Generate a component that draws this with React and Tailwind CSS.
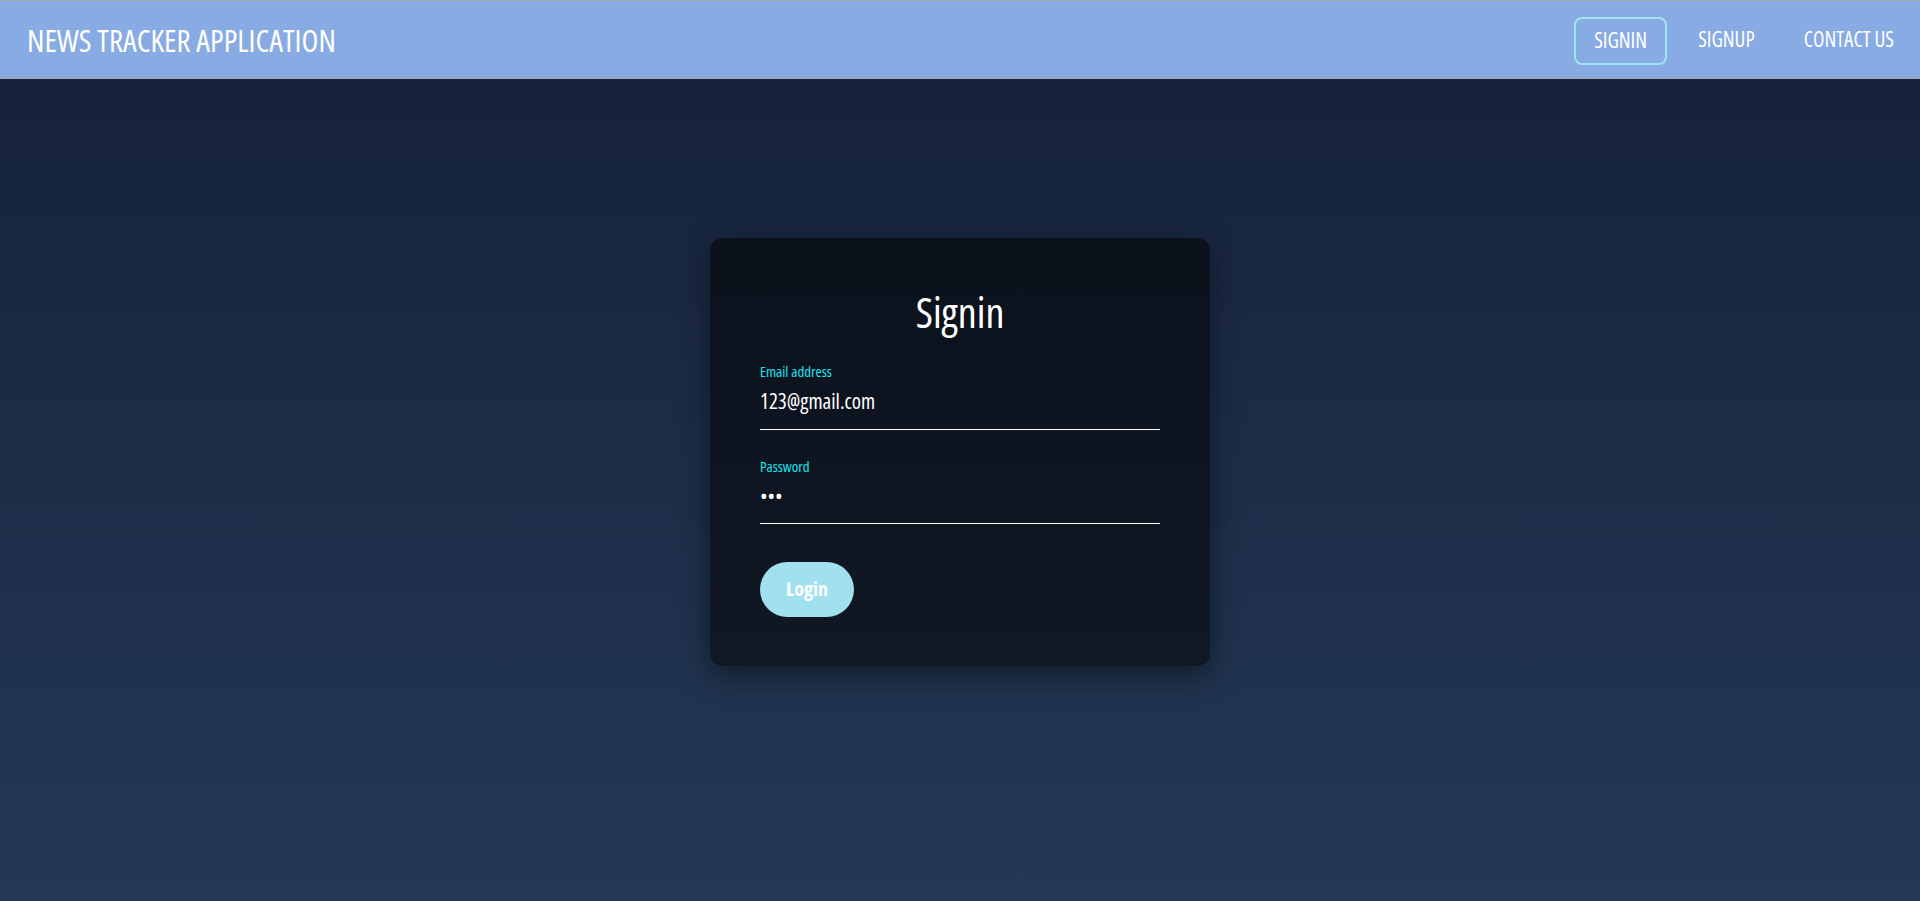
import React, { useState } from "react";

const font = { fontFamily: '"Open Sans", "Roboto", "Liberation Sans", sans-serif' };

const Navbar = () => {
  return (
    <nav className="h-[79px] bg-[#88abe3] border-t border-b border-[#a9a9a9] flex items-center justify-between pl-[27px] pr-[26px]">
      <h1 className="text-[31px] font-medium text-white pt-[2px]">NEWS TRACKER APPLICATION</h1>
      <div className="flex items-center">
        <a className="h-[48px] w-[93px] flex items-center justify-center border-2 border-[#9ee3f0] rounded-[8px] text-white text-[21px] font-medium mt-[2px]">
          SIGNIN
        </a>
        <a className="ml-[31px] text-white text-[21px] font-medium">SIGNUP</a>
        <a className="ml-[49px] text-white text-[21px] font-medium">CONTACT US</a>
      </div>
    </nav>
  );
};

const App = () => {
  const [email, setEmail] = useState("123@gmail.com");
  const [password, setPassword] = useState("123");

  return (
    <div style={font} className="font-stretch-condensed min-h-[901px] flex flex-col bg-gradient-to-b from-[#15203a] to-[#243955]">
      <Navbar />
      <div className="flex justify-center pt-[159px]">
        <form
          onSubmit={(e) => e.preventDefault()}
          className="w-[500px] h-[428px] rounded-[12px] bg-gradient-to-b from-[#0c121c] to-[#101824] shadow-[0_10px_30px_rgba(0,0,0,0.45)] px-[50px] pt-[50px]"
        >
          <h3 className="text-center text-white text-[42px] font-medium leading-[48px]">Signin</h3>

          <div className="mt-[26px]">
            <label className="block text-[#1ee3f2] text-[15px] font-medium leading-[18px]">Email address</label>
            <input
              value={email}
              onChange={(e) => setEmail(e.target.value)}
              type="email"
              className="w-full bg-transparent text-white text-[21px] font-medium pt-[6px] pb-[11px] border-b border-white outline-none"
            />
          </div>

          <div className="mt-[27px]">
            <label className="block text-[#1ee3f2] text-[15px] font-medium leading-[18px]">Password</label>
            <input
              autoFocus
              value={password}
              onChange={(e) => setPassword(e.target.value)}
              type="password"
              className="w-full bg-transparent text-white text-[20px] pt-[7px] pb-[11px] border-b border-white outline-none caret-white"
            />
          </div>

          <button
            type="submit"
            className="mt-[38px] w-[94px] h-[55px] rounded-full bg-[#a1e1ee] text-white text-[20px] font-bold"
          >
            Login
          </button>
        </form>
      </div>
    </div>
  );
};

export default App;
